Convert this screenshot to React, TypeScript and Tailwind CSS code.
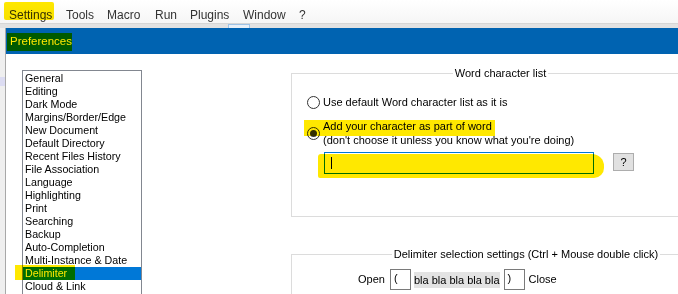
const menu = [
  { label: "Settings", w: "w-[57px]" },
  { label: "Tools", w: "w-[41px]" },
  { label: "Macro", w: "w-[48px]" },
  { label: "Run", w: "w-[35px]" },
  { label: "Plugins", w: "w-[53px]" },
  { label: "Window", w: "w-[56px]" },
  { label: "?", w: "w-[20px]" },
];

const pages = [
  "General",
  "Editing",
  "Dark Mode",
  "Margins/Border/Edge",
  "New Document",
  "Default Directory",
  "Recent Files History",
  "File Association",
  "Language",
  "Highlighting",
  "Print",
  "Searching",
  "Backup",
  "Auto-Completion",
  "Multi-Instance & Date",
  "Delimiter",
  "Cloud & Link",
];

function Radio({ checked }: { checked?: boolean }) {
  return (
    <div className="w-[13px] h-[13px] shrink-0 rounded-full border border-[#333] bg-white flex items-center justify-center">
      {checked && <div className="w-[7px] h-[7px] rounded-full bg-[#333]" />}
    </div>
  );
}

export default function App() {
  return (
    <div className="relative isolate w-[678px] h-[294px] overflow-hidden bg-white font-['Liberation_Sans',Arial,sans-serif] text-[11px] text-black">
      {/* menu bar */}
      <div className="h-[23px] flex pl-[9px] pt-[7px] text-[12px] leading-[16px] text-[#333] bg-gradient-to-b from-white to-[#f6f6f6]">
        {menu.map((m) => (
          <div key={m.label} className={m.w}>
            {m.label}
          </div>
        ))}
      </div>
      <div className="h-[5px] bg-[#e2e2e2] border-t border-[#d6d6d6] flex">
        <div className="ml-[228px] w-[22px] h-full border-x border-t border-[#9fc3e6] bg-[#e8f0f8]" />
      </div>

      <div className="flex h-[266px]">
        {/* background window edge */}
        <div className="w-[6px] shrink-0 bg-[#efefef] border-r border-[#a8a8a8] flex flex-col">
          <div className="mt-[49px] h-[9px] bg-[#dcdcf2]" />
        </div>

        {/* dialog */}
        <div className="flex-1 flex flex-col">
          <div className="h-[26px] shrink-0 bg-[#0063b1] text-white text-[11.5px] leading-[26px] pl-[4px]">
            Preferences
          </div>
          <div className="flex items-start pl-[16px]">
            <div className="mt-[16px] w-[120px] h-[240px] shrink-0 border border-[#828790] pt-[1px] leading-[13px] text-[10.7px]">
              {pages.map((p) => (
                <div
                  key={p}
                  className={
                    p === "Delimiter"
                      ? "h-[13px] pl-[2px] bg-[#0078d7] text-white"
                      : "h-[13px] pl-[2px]"
                  }
                >
                  {p}
                </div>
              ))}
            </div>

            <div className="ml-[149px] mt-[13px] flex flex-col">
              <fieldset className="w-[404px] h-[150px] border border-[#dcdcdc] pl-[15px]">
                <legend className="mx-auto px-[2px] leading-[13px]">Word character list</legend>
                <div className="pt-[15px] flex items-center gap-[3px] leading-[14px]">
                  <Radio />
                  <span>Use default Word character list as it is</span>
                </div>
                <div className="mt-[10px] flex items-center gap-[3px] leading-[14px]">
                  <Radio checked />
                  <div>
                    <div>Add your character as part of word</div>
                    <div>(don't choose it unless you know what you're doing)</div>
                  </div>
                </div>
                <div className="mt-[5px] ml-[17px] flex items-start">
                  <div className="w-[270px] h-[22px] border border-[#0078d7] bg-white flex items-center pl-[6px]">
                    <div className="w-px h-[12px] bg-black" />
                  </div>
                  <div className="ml-[19px] mt-[1px] w-[21px] h-[18px] border border-[#adadad] bg-[#e1e1e1] flex items-center justify-center leading-none">
                    ?
                  </div>
                </div>
              </fieldset>

              <fieldset className="mt-[31px] w-[404px] h-[60px] border border-[#dcdcdc] pl-[66px]">
                <legend className="mx-auto px-[2px] leading-[13px]">
                  Delimiter selection settings (Ctrl + Mouse double click)
                </legend>
                <div className="pt-[8px] flex items-center">
                  <span>Open</span>
                  <div className="ml-[5px] w-[21px] h-[21px] border border-[#7a7a7a] pl-[3px] leading-[17px]">(</div>
                  <span className="ml-[3px] bg-[#e3e3e3] leading-[16px]">bla bla bla bla bla</span>
                  <div className="ml-[4px] w-[21px] h-[21px] border border-[#7a7a7a] pl-[3px] leading-[17px]">)</div>
                  <span className="ml-[4px]">Close</span>
                </div>
              </fieldset>
            </div>
          </div>
        </div>
      </div>

      {/* highlighter marks */}
      <div className="pointer-events-none absolute left-[4px] top-[2px] w-[50px] h-[18px] bg-[#ffe800] mix-blend-multiply rounded-[2px]" />
      <div className="pointer-events-none absolute left-[7px] top-[33px] w-[65px] h-[18px] bg-[#ffe800] mix-blend-multiply" />
      <div className="pointer-events-none absolute left-[15px] top-[265px] w-[60px] h-[15px] bg-[#ffe800] mix-blend-multiply" />
      <div className="pointer-events-none absolute left-[304px] top-[120px] w-[191px] h-[16px] bg-[#ffe800] mix-blend-multiply" />
      <div className="pointer-events-none absolute left-[318px] top-[154px] w-[286px] h-[24px] bg-[#ffe800] mix-blend-multiply rounded-[3px_12px_10px_2px]" />
    </div>
  );
}
